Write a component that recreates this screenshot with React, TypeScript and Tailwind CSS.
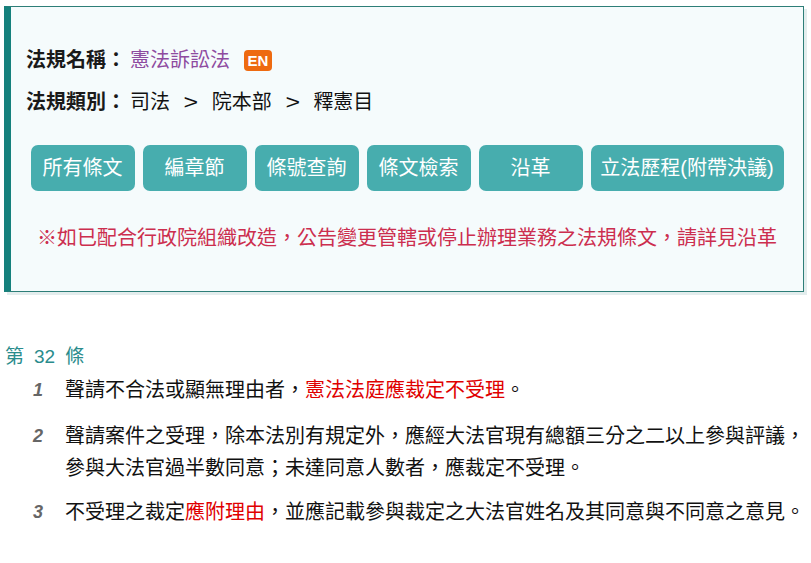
import React from "react";

const buttons = [
  { t: "所有條文", w: "w-[104px]" },
  { t: "編章節", w: "w-[104px]" },
  { t: "條號查詢", w: "w-[104px]" },
  { t: "條文檢索", w: "w-[104px]" },
  { t: "沿革", w: "w-[104px]" },
  { t: "立法歷程(附帶決議)", w: "w-[193px]" },
];

export default function App() {
  return (
    <div
      className="w-[811px] h-[563px] bg-white text-[#111]"
      style={{ fontFamily: '"Liberation Sans","Noto Sans CJK TC",sans-serif' }}
    >
      <div className="pt-[6px] pl-[4px]">
        <div className="w-[800px] h-[286px] bg-[#f5fbfc] border border-[#2d7e78] border-l-[7px] border-l-[#15807c] shadow-[3px_3px_0_#e3eded] pt-[32px] pl-[15px]">
          <div className="flex items-center h-[42px] text-[20px] leading-[42px]">
            <span className="font-bold text-[#1a1a1a]">法規名稱：</span>
            <span className="ml-[4px] text-[#8e4ba0]">憲法訴訟法</span>
            <span className="ml-[14px] inline-flex items-center justify-center h-[21px] w-[28px] rounded-[4px] bg-[#ee6a10] text-white text-[15px] font-bold leading-none">
              EN
            </span>
          </div>
          <div className="flex items-center h-[42px] text-[20px] leading-[42px]">
            <span className="font-bold text-[#1a1a1a]">法規類別：</span>
            <span className="ml-[4px]">司法</span>
            <span className="mx-[15px] scale-x-125">&gt;</span>
            <span>院本部</span>
            <span className="mx-[15px] scale-x-125">&gt;</span>
            <span>釋憲目</span>
          </div>
          <div className="flex justify-center gap-[8px] mt-[22px] pr-[15px]">
            {buttons.map((b) => (
              <div
                key={b.t}
                className={`${b.w} h-[46px] rounded-[7px] bg-[#47adae] text-white text-[20px] flex items-center justify-center`}
              >
                {b.t}
              </div>
            ))}
          </div>
          <div className="mt-[32px] pr-[15px] text-center text-[20px] leading-[30px] text-[#cc2e4e]">
            ※如已配合行政院組織改造，公告變更管轄或停止辦理業務之法規條文，請詳見沿革
          </div>
        </div>
      </div>

      <div className="mt-[50px] pl-[5px]">
        <div className="flex gap-[10px] text-[19px] leading-[30px] text-[#2a8c8c]">
          <span>第</span>
          <span>32</span>
          <span>條</span>
        </div>
        <div className="mt-[2px]">
          <div className="flex text-[20px] leading-[32px]">
            <span className="w-[60px] pl-[28px] text-[18px] italic font-bold text-[#666]">1</span>
            <span>
              聲請不合法或顯無理由者，<span className="text-[#e00000]">憲法法庭應裁定不受理</span>。
            </span>
          </div>
          <div className="flex text-[20px] leading-[32px] mt-[14px]">
            <span className="w-[60px] shrink-0 pl-[28px] text-[18px] italic font-bold text-[#666]">2</span>
            <span className="w-[746px]">
              聲請案件之受理，除本法別有規定外，應經大法官現有總額三分之二以上參與評議，參與大法官過半數同意；未達同意人數者，應裁定不受理。
            </span>
          </div>
          <div className="flex text-[20px] leading-[32px] mt-[12px]">
            <span className="w-[60px] pl-[28px] text-[18px] italic font-bold text-[#666]">3</span>
            <span>
              不受理之裁定<span className="text-[#e00000]">應附理由</span>，並應記載參與裁定之大法官姓名及其同意與不同意之意見。
            </span>
          </div>
        </div>
      </div>
    </div>
  );
}
